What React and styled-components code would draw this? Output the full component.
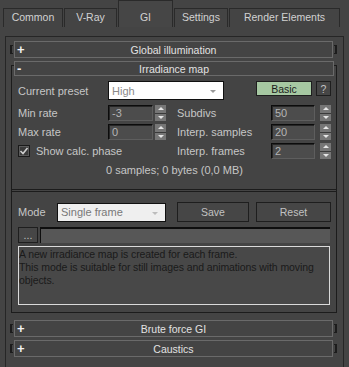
import React from 'react';
import styled, { createGlobalStyle } from 'styled-components';

const GlobalStyle = createGlobalStyle`
  html, body {
    margin: 0;
    padding: 0;
    background: #444444;
  }
  body {
    font-family: "Liberation Sans", Arial, sans-serif;
    font-size: 11px;
    color: #c6c6c6;
  }
  * { box-sizing: border-box; }
`;

const Page = styled.div`
  width: 349px;
  height: 367px;
  overflow: hidden;
  background: #444444;
`;

// tabs
const TabBar = styled.div`
  display: flex;
  align-items: flex-end;
  gap: 1px;
  height: 27px;
  padding-left: 3px;
`;

const Tab = styled.div`
  width: ${p => p.$w}px;
  height: ${p => (p.$active ? 27 : 19)}px;
  border: 1px solid #2a2a2a;
  border-bottom: none;
  display: flex;
  align-items: flex-end;
  justify-content: center;
  padding-bottom: 4px;
  font-size: 10.5px;
  color: #d2d2d2;
  background: ${p => (p.$active ? '#464646' : '#444444')};
`;

const ScrollArea = styled.div`
  margin: 9px 5px 0 5px;
  border: 1px solid #262626;
  padding: 4px 6px 30px 4px;
  display: flex;
  flex-direction: column;
`;

// rollouts
const RolloutRow = styled.div`
  display: flex;
  align-items: center;
  gap: 1px;
  margin-top: ${p => p.$top || 0}px;
`;

const Bracket = styled.span`
  width: 3px;
  height: 9px;
  border: 1px solid #1c1c1c;
  border-${p => (p.$side === 'left' ? 'right' : 'left')}: none;
  border-${p => p.$side}-width: 2px;
`;

const RolloutHeader = styled.div`
  flex: 1;
  height: 17px;
  border: 1px solid #6a6a6a;
  display: grid;
  grid-template-columns: 16px 1fr 16px;
  align-items: center;
  color: #e2e2e2;
  font-size: 10.5px;
  margin: ${p => p.$margin || '0'};
`;

const Sign = styled.span`
  padding-left: 2px;
  font-weight: bold;
  font-size: 13px;
  line-height: 13px;
  color: #f2f2f2;
`;

const Title = styled.span`
  text-align: center;
`;

const OpenRollout = styled.div`
  display: flex;
  flex-direction: column;
  margin-top: 3px;
`;

const Frame = styled.div`
  position: relative;
  margin: -11px 0 0 1px;
  border: 1px solid #1c1c1c;
  border-top: none;
  padding: 16px 5px 7px 6px;
  display: flex;
  flex-direction: column;

  &::before, &::after {
    content: '';
    position: absolute;
    top: 0;
    width: 2px;
    height: 1px;
    background: #1c1c1c;
  }
  &::before { left: 0; }
  &::after { right: 0; }
`;

const Row = styled.div`
  display: flex;
  align-items: center;
  height: ${p => p.$h || 16}px;
  margin-top: ${p => p.$top || 0}px;
  gap: ${p => p.$gap || 0}px;
`;

const Label = styled.span`
  width: ${p => p.$w}px;
  flex-shrink: 0;
  white-space: nowrap;
`;

const Select = styled.div`
  position: relative;
  width: ${p => p.$w}px;
  height: 19px;
  background: ${p => p.$bg || '#ffffff'};
  border: 1px solid #101010;
  color: ${p => p.$color || '#8a8a8a'};
  display: flex;
  align-items: center;
  padding-left: 3px;
  font-size: 11px;
`;

const Arrow = styled.span`
  position: absolute;
  right: 7px;
  top: 8px;
  width: 0;
  height: 0;
  border-left: 3px solid transparent;
  border-right: 3px solid transparent;
  border-top: 3px solid ${p => p.$c || '#9a9a9a'};
`;

const Button = styled.div`
  width: ${p => p.$w}px;
  height: ${p => p.$h || 15}px;
  align-self: ${p => (p.$top ? 'flex-start' : 'center')};
  margin-left: ${p => p.$ml || 0}px;
  background: ${p => p.$bg || '#464646'};
  border: 1px solid #1e1e1e;
  color: ${p => p.$color || '#c2c2c2'};
  display: flex;
  align-items: center;
  justify-content: center;
  font-size: 10.5px;
`;

const ParamGrid = styled.div`
  display: grid;
  grid-template-columns: 90px 58px 11px 94px 60px;
  grid-auto-rows: 16px;
  row-gap: 3px;
  align-items: center;
  margin-top: 5px;
`;

const Spinner = styled.div`
  display: flex;
  height: 16px;
  gap: ${p => p.$gap}px;
`;

const SpinInput = styled.div`
  flex: 1;
  height: 16px;
  background: #4c4c4c;
  border: 1px solid;
  border-color: #0c0c0c #5e5e5e #5e5e5e #0c0c0c;
  box-shadow: inset 1px 1px 0 #262626;
  color: #b4b4b4;
  padding-left: 3px;
  display: flex;
  align-items: center;
`;

const SpinArrows = styled.div`
  width: 11px;
  height: 16px;
  display: flex;
  flex-direction: column;
  gap: 1px;
  background: #3a3a3a;
`;

const SpinHalf = styled.span`
  flex: 1;
  background: #767676;
  display: flex;
  align-items: center;
  justify-content: center;

  &::after {
    content: '';
    border-left: 3px solid transparent;
    border-right: 3px solid transparent;
    ${p => (p.$down ? 'border-top: 3px solid #e6e6e6;' : 'border-bottom: 3px solid #e6e6e6;')}
  }
`;

const CheckRow = styled.div`
  grid-column: 1 / 4;
  display: flex;
  align-items: center;
  gap: 6px;
`;

const CheckBox = styled.span`
  width: 12px;
  height: 12px;
  background: #3a3a3a;
  border: 1px solid #1a1a1a;
  box-shadow: inset 0 0 0 1px #5a5a5a;
  display: flex;
  align-items: center;
  justify-content: center;
`;

const Summary = styled.div`
  margin-top: 5px;
  line-height: 13px;
  text-align: center;
`;

const Divider = styled.div`
  margin: 12px -5px 0 -6px;
  height: 3px;
  border-top: 1px solid #1c1c1c;
  border-bottom: 1px solid #1c1c1c;
`;

const PathField = styled.div`
  flex: 1;
  height: 16px;
  margin-right: 1px;
  background: #575757;
  border-top: 2px solid #0e0e0e;
  border-left: 1px solid #0e0e0e;
`;

const InfoBox = styled.div`
  margin: 3px 1px 0 0;
  height: 59px;
  border: 1px solid #dadada;
  background: #484848;
  color: #1a1a1a;
  padding: 1px 0 0 0;
  font-size: 10.5px;
  line-height: 13px;
  letter-spacing: -0.1px;
  white-space: pre;
  overflow: hidden;
`;

const Spin = ({ value, gap }) => (
  <Spinner $gap={gap}>
    <SpinInput>{value}</SpinInput>
    <SpinArrows>
      <SpinHalf />
      <SpinHalf $down />
    </SpinArrows>
  </Spinner>
);

const Collapsed = ({ title, top }) => (
  <RolloutRow $top={top}>
    <Bracket $side="left" />
    <RolloutHeader>
      <Sign>+</Sign>
      <Title>{title}</Title>
    </RolloutHeader>
    <Bracket $side="right" />
  </RolloutRow>
);

const tabs = [
  { label: 'Common', w: 60 },
  { label: 'V-Ray', w: 53 },
  { label: 'GI', w: 55, active: true },
  { label: 'Settings', w: 54 },
  { label: 'Render Elements', w: 111 },
];

export default function App() {
  return (
    <Page>
      <GlobalStyle />
      <TabBar>
        {tabs.map(t => (
          <Tab key={t.label} $w={t.w} $active={t.active}>{t.label}</Tab>
        ))}
      </TabBar>

      <ScrollArea>
        <Collapsed title="Global illumination" />

        <OpenRollout>
          <RolloutHeader $margin="0 3px 0 4px">
            <Sign>-</Sign>
            <Title>Irradiance map</Title>
          </RolloutHeader>
          <Frame>
            <Row $h={19}>
              <Label $w={90}>Current preset</Label>
              <Select $w={116}>High<Arrow /></Select>
              <Button $w={56} $top $ml={32} $bg="#a6c8a2" $color="#1c1c1c">Basic</Button>
              <Button $w={15} $top $ml={4}>?</Button>
            </Row>

            <ParamGrid>
              <Label $w={90}>Min rate</Label>
              <Spin value="-3" gap={2} />
              <span />
              <Label $w={94}>Subdivs</Label>
              <Spin value="50" gap={5} />

              <Label $w={90}>Max rate</Label>
              <Spin value="0" gap={2} />
              <span />
              <Label $w={94}>Interp. samples</Label>
              <Spin value="20" gap={5} />

              <CheckRow>
                <CheckBox>
                  <svg width="10" height="10" viewBox="0 0 10 10">
                    <polyline points="1.5,5 4,7.5 8.5,2" fill="none" stroke="#cfcfcf" strokeWidth="1.6" />
                  </svg>
                </CheckBox>
                Show calc. phase
              </CheckRow>
              <Label $w={94}>Interp. frames</Label>
              <Spin value="2" gap={5} />
            </ParamGrid>

            <Summary>0 samples; 0 bytes (0,0 MB)</Summary>

            <Divider />

            <Row $h={20} $top={10}>
              <Label $w={39}>Mode</Label>
              <Select $w={109} $bg="#efefef" $color="#787878">Single frame<Arrow $c="#bcbcbc" /></Select>
              <Button $w={72} $h={20} $ml={11}>Save</Button>
              <Button $w={75} $h={20} $ml={7}>Reset</Button>
            </Row>

            <Row $top={5} $gap={2}>
              <Button $w={20} $h={16}>...</Button>
              <PathField />
            </Row>

            <InfoBox>
              {'A new irradiance map is created for each frame.\nThis mode is suitable for still images and animations with moving\nobjects.'}
            </InfoBox>
          </Frame>
        </OpenRollout>

        <Collapsed title="Brute force GI" top={7} />
        <Collapsed title="Caustics" top={3} />
      </ScrollArea>
    </Page>
  );
}
